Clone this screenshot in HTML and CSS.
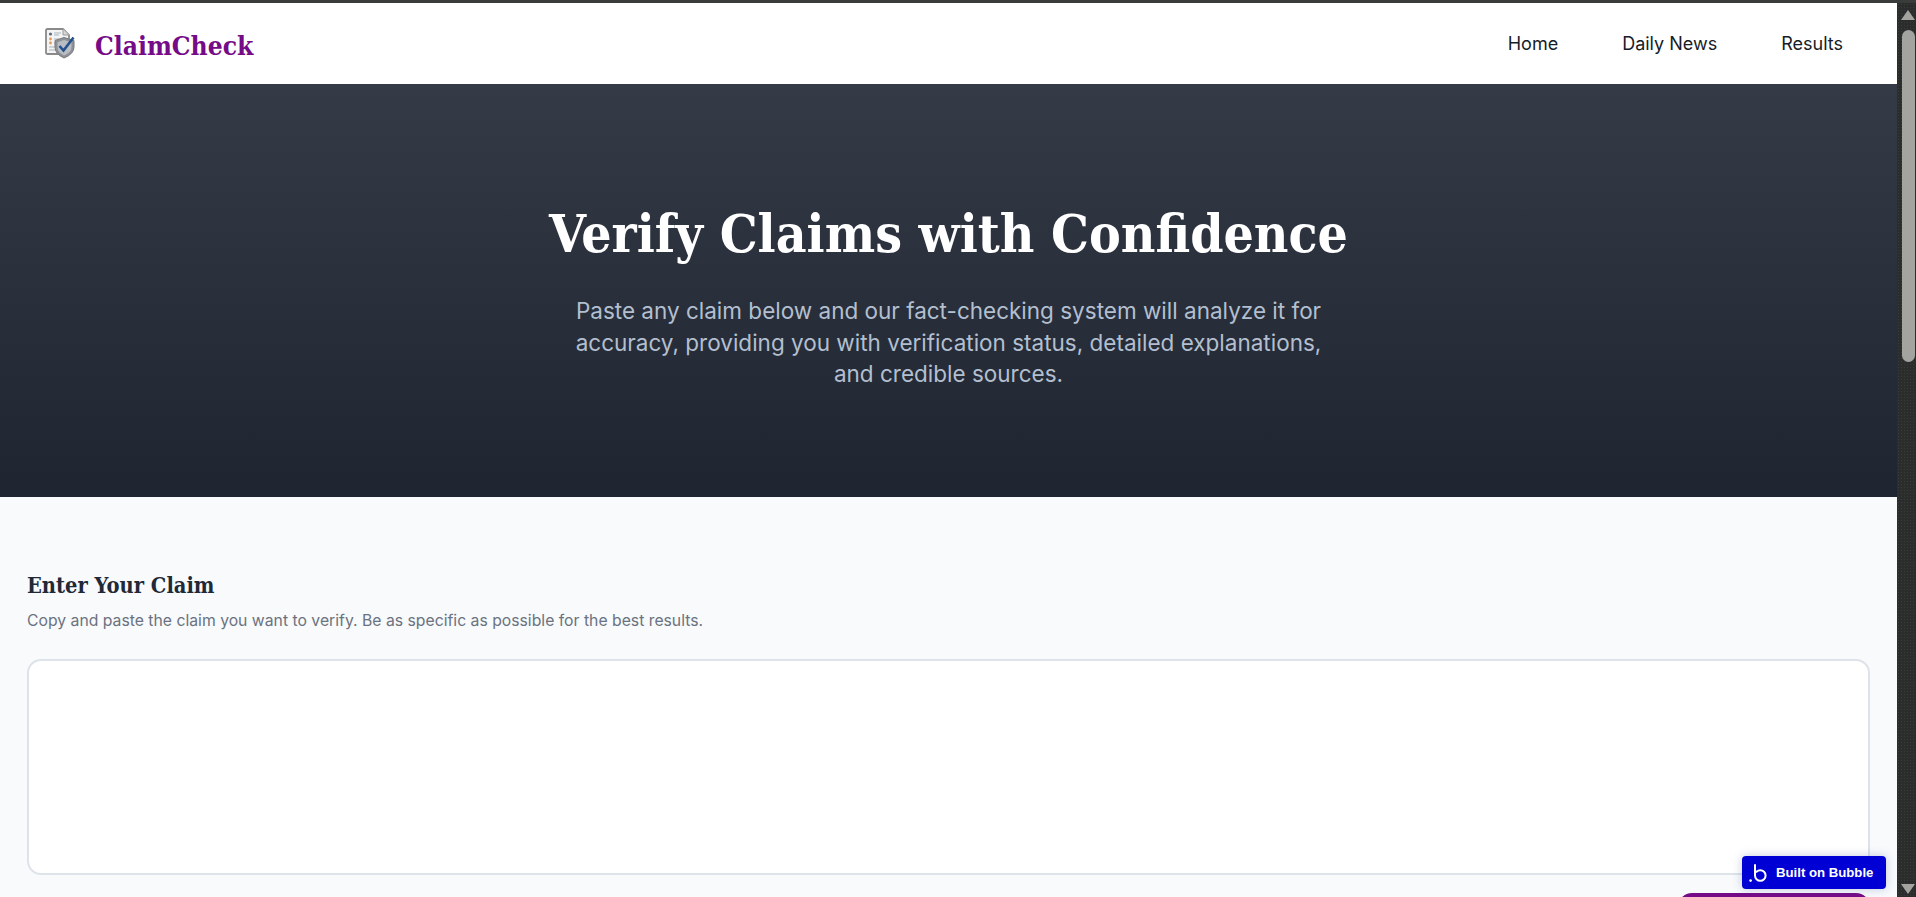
FILE: index.html
```html
<!DOCTYPE html>
<html lang="en">
<head>
    <meta charset="UTF-8">
    <meta name="viewport" content="width=device-width, initial-scale=1.0">
    <title>ClaimCheck</title>
    <link rel="stylesheet" href="styles.css">
</head>
<body>

    <div class="topline"></div>

    <div class="window">
        <div class="page">
            <header class="navbar">
                <a class="brand" href="#">
                    <svg class="brand-icon" viewBox="0 0 32 32" width="32" height="32">
                        <path d="M2 3.5 Q2 2 3.5 2 H19 L25 8 V13 H22 V27 H3.5 Q2 27 2 25.5 Z" fill="#f4f4f4" stroke="#8a8a8a" stroke-width="1.8"/>
                        <path d="M19 2 V8 H25" fill="#d8d8d8" stroke="#9a9a9a" stroke-width="1"/>
                        <circle cx="6.5" cy="7" r="1.6" fill="#5f6b78"/>
                        <path d="M10 6 H17 M10 8 H15" stroke="#a8b2bc" stroke-width="1"/>
                        <circle cx="6.5" cy="12" r="1.4" fill="#e29a58"/>
                        <circle cx="6.5" cy="16" r="1.4" fill="#e29a58"/>
                        <path d="M10 12 H15 M10 16 H14 M5 20 H13 M5 23 H13" stroke="#a8b2bc" stroke-width="1"/>
                        <path d="M20 10.5 L30 13.5 V20 Q30 27 20 31 Q11 27 11 20 V13.5 Z" fill="#8d9196" stroke="#77797c" stroke-width="1"/>
                        <path d="M20 13 L27.5 15.2 V20 Q27.5 25.5 20 28.4 Q13.5 25.5 13.5 20 V15.2 Z" fill="#b9bcc0"/>
                        <path d="M15.5 19 L19.5 23.5 L29.5 10.5" fill="none" stroke="#23508f" stroke-width="2.6"/>
                    </svg>
                    <span class="brand-name">ClaimCheck</span>
                </a>
                <nav class="nav-links">
                    <a href="#">Home</a>
                    <a href="#">Daily News</a>
                    <a href="#">Results</a>
                </nav>
            </header>

            <section class="hero">
                <h1>Verify Claims with Confidence</h1>
                <p>Paste any claim below and our fact-checking system will analyze it for accuracy, providing you with verification status, detailed explanations, and credible sources.</p>
            </section>

            <main class="claim-section">
                <h2>Enter Your Claim</h2>
                <p class="hint">Copy and paste the claim you want to verify. Be as specific as possible for the best results.</p>
                <textarea class="claim-input"></textarea>
                <div class="actions">
                    <button class="btn" type="button" aria-label="Submit claim"></button>
                </div>
            </main>

            <a class="bubble-badge" href="#">
                <svg viewBox="0 0 18 20" width="18" height="20">
                    <circle cx="1.6" cy="17.6" r="1.3" fill="#fff"/>
                    <path d="M6 2 V12.5 A5.3 5.3 0 1 0 11.3 7.2 A5.3 5.3 0 0 0 7.5 8.8" fill="none" stroke="#fff" stroke-width="2" stroke-linecap="round"/>
                </svg>
                <span>Built on Bubble</span>
            </a>
        </div>

        <div class="scrollbar">
            <span class="arrow-up"></span>
            <span class="thumb"></span>
            <span class="arrow-down"></span>
        </div>
    </div>

</body>
</html>
```

FILE: styles.css
```css
* {
    box-sizing: border-box;
}

html, body {
    height: 100%;
}

body {
    margin: 0;
    display: flex;
    flex-direction: column;
    overflow: hidden;
    font-family: Inter, Arial, sans-serif;
    background-color: #2b2d2c;
}

.topline {
    height: 3px;
    flex: none;
    background: #3a3c3b;
}

.window {
    flex: 1;
    min-height: 0;
    display: flex;
}

.page {
    position: relative;
    flex: 1;
    min-width: 0;
    overflow: hidden;
    background: #f8fafc;
}

.navbar {
    height: 81px;
    display: flex;
    align-items: center;
    justify-content: space-between;
    padding: 0 54px 0 44px;
    background: white;
}

.brand {
    display: flex;
    align-items: center;
    gap: 19px;
    text-decoration: none;
}

.brand-icon {
    display: block;
    margin-bottom: 1px;
}

.brand-name {
    font-family: "DejaVu Serif Condensed", "DejaVu Serif", serif;
    font-stretch: condensed;
    font-size: 26.2px;
    font-weight: bold;
    color: #760b87;
    margin-top: 3px;
}

.nav-links {
    display: flex;
    gap: 64px;
}

.nav-links a {
    font-size: 18px;
    font-weight: 400;
    color: #161c28;
    text-decoration: none;
}

.hero {
    height: 413px;
    padding-top: 113px;
    text-align: center;
    background: linear-gradient(to bottom, #343b47, #1e2531);
}

.hero h1 {
    margin: 0;
    font-family: "DejaVu Serif Condensed", "DejaVu Serif", serif;
    font-stretch: condensed;
    font-size: 53px;
    line-height: 72px;
    font-weight: bold;
    color: white;
}

.hero p {
    width: 768px;
    margin: 26px auto 0;
    font-size: 22.5px;
    line-height: 31.6px;
    color: #b3bfcf;
}

.claim-section {
    padding: 73px 27px 0;
}

.claim-section h2 {
    margin: 0;
    font-family: "DejaVu Serif Condensed", "DejaVu Serif", serif;
    font-stretch: condensed;
    font-size: 21.7px;
    line-height: 32px;
    font-weight: bold;
    color: #1f2937;
}

.hint {
    margin: 7px 0 0;
    font-size: 15.75px;
    line-height: 24px;
    color: #6b7280;
}

.claim-input {
    display: block;
    width: 100%;
    height: 216px;
    margin-top: 26px;
    border: 2px solid #dde3e9;
    border-radius: 14px;
    background: white;
    resize: none;
}

.actions {
    display: flex;
    justify-content: flex-end;
    margin-top: 18px;
}

.btn {
    width: 192px;
    height: 48px;
    border: none;
    border-radius: 14px;
    background-color: #760b87;
}

.bubble-badge {
    position: absolute;
    left: 1742px;
    top: 853px;
    width: 144px;
    height: 33px;
    display: flex;
    align-items: center;
    gap: 9px;
    padding-left: 7px;
    border-radius: 4px;
    background: #0000d4;
    box-shadow: 0 0 10px rgba(90, 110, 160, 0.35);
    color: white;
    font-family: "Liberation Sans", Arial, sans-serif;
    font-size: 13.2px;
    font-weight: bold;
    text-decoration: none;
}

.scrollbar {
    width: 19px;
    flex: none;
    display: flex;
    flex-direction: column;
    align-items: center;
    padding-left: 3px;
    background-color: #2b2d2c;
    background-image: radial-gradient(#3a3c3b 1px, transparent 1px);
    background-size: 3px 3px;
}

.arrow-up {
    margin-top: 7px;
    border-left: 7px solid transparent;
    border-right: 7px solid transparent;
    border-bottom: 10px solid #a3a3a0;
}

.thumb {
    width: 13px;
    height: 332px;
    margin-top: 10px;
    border-radius: 7px;
    background: #a3a3a0;
}

.arrow-down {
    margin-top: auto;
    margin-bottom: 3px;
    border-left: 7px solid transparent;
    border-right: 7px solid transparent;
    border-top: 10px solid #a3a3a0;
}
```
